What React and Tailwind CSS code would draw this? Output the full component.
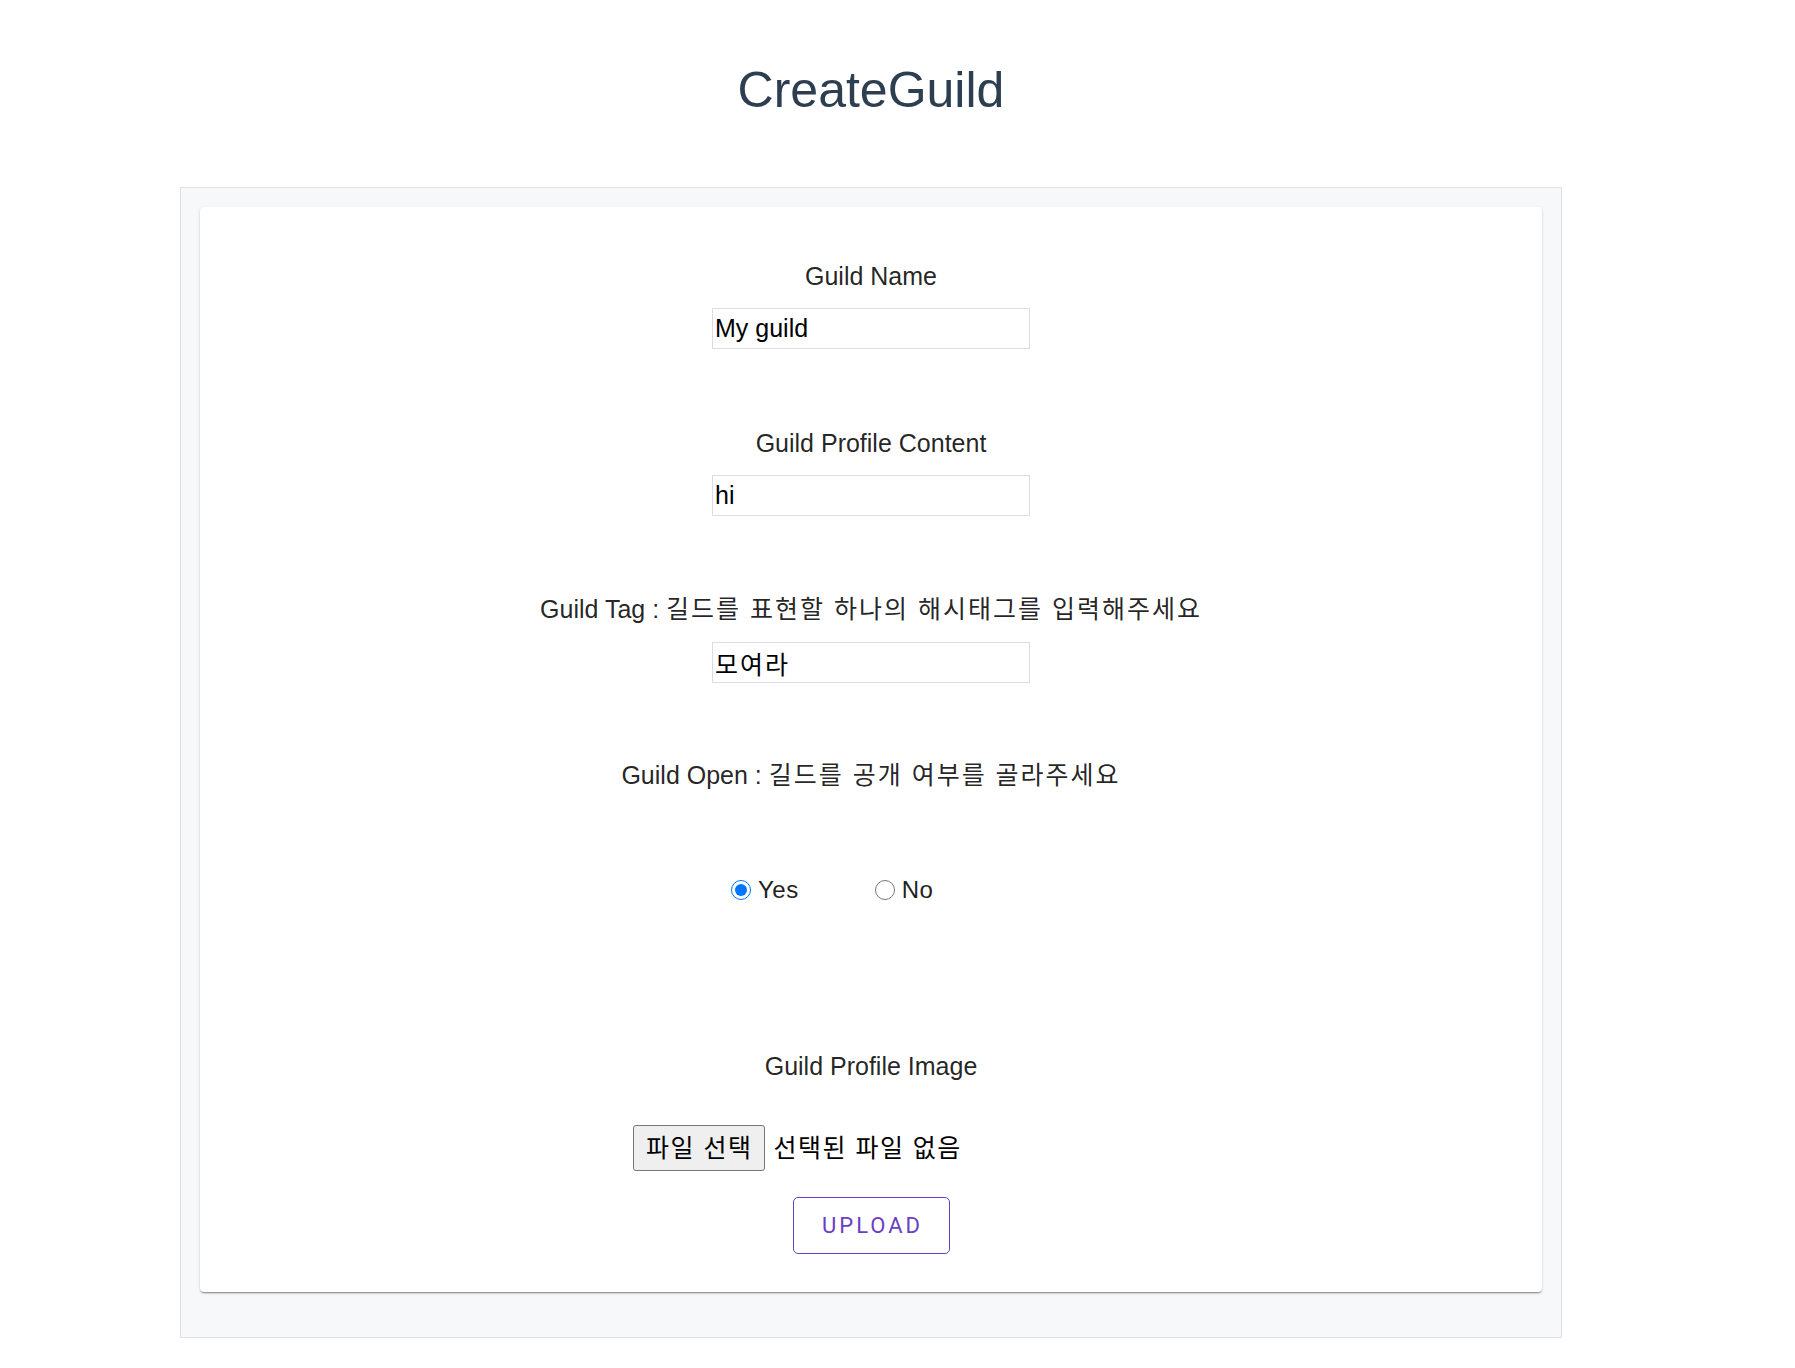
import React from "react";

const FONT = "font-['Liberation_Sans','Noto_Sans_CJK_KR',sans-serif]";

function K({ children }) {
  return <span className="tracking-[2px]">{children}</span>;
}

function Field({ label, value, mt, inputMt = "mt-[17px]", korean = false }) {
  return (
    <div className={`flex flex-col items-center ${mt}`}>
      <div className="text-[25px] leading-[30px] text-[rgba(0,0,0,0.87)] whitespace-nowrap">{label}</div>
      <input
        readOnly
        value={value}
        className={`${inputMt} w-[318px] h-[41px] border border-[#dcdce2] bg-white px-[2px] text-[25px] leading-[30px] text-black outline-none ${korean ? "tracking-[2px]" : ""} ${FONT}`}
      />
    </div>
  );
}

export default function App() {
  return (
    <div className={`min-h-screen bg-white ${FONT}`}>
      <div className="w-[1742px] pt-[65px] pb-[30px]">
        <h1 className="text-center text-[50px] leading-[50px] font-normal text-[#2c3e50]">CreateGuild</h1>
        <div className="mx-[180px] mt-[72px] border border-[#dfe1e5] bg-[#f7f8fa] pt-[19px] px-[19px] pb-[45px]">
          <div className="bg-white rounded-[4px] shadow-[0_2px_2px_-1px_rgba(0,0,0,0.3),0_1px_1px_0_rgba(0,0,0,0.14),0_1px_3px_0_rgba(0,0,0,0.12)] pt-[54px] pb-[38px] flex flex-col items-center">
            <Field label="Guild Name" value="My guild" mt="mt-0" />
            <Field label="Guild Profile Content" value="hi" mt="mt-[79px]" />
            <Field
              label={<>Guild Tag : <K>길드를 표현할 하나의 해시태그를 입력해주세요</K></>}
              value="모여라"
              korean
              mt="mt-[78px]"
              inputMt="mt-[18px]"
            />
            <div className="mt-[77px] text-[25px] leading-[30px] text-[rgba(0,0,0,0.87)] whitespace-nowrap">
              Guild Open : <K>길드를 공개 여부를 골라주세요</K>
            </div>
            <div className="mt-[85px] w-[318px] h-[30px] flex items-center pl-[19px] text-[24px] leading-[30px] text-[#1f1f1f]">
              <label className="flex items-center">
                <input type="radio" name="open" defaultChecked className="m-0 w-[20px] h-[20px]" />
                <span className="ml-[7px] tracking-[0.5px]">Yes</span>
              </label>
              <label className="flex items-center ml-[76px]">
                <input type="radio" name="open" className="m-0 w-[20px] h-[20px]" />
                <span className="ml-[7px] tracking-[0.5px]">No</span>
              </label>
            </div>
            <div className="mt-[146px] text-[25px] leading-[30px] text-[rgba(0,0,0,0.87)]">Guild Profile Image</div>
            <div className="mt-[44px] w-[476px] h-[46px] flex items-center">
              <div className="h-[46px] px-[12px] flex items-center border border-[#767676] bg-[#efefef] rounded-[3px] text-[25px] leading-[30px] text-black whitespace-nowrap tracking-[1.5px]">
                파일 선택
              </div>
              <span className="ml-[8px] text-[25px] leading-[30px] text-black whitespace-nowrap tracking-[1.5px]">선택된 파일 없음</span>
            </div>
            <button className="mt-[26px] w-[157px] h-[57px] border border-[#6a3fc4] rounded-[5px] bg-white text-[#6a3fc4] text-[22px] tracking-[3px] pl-[3px] font-['Roboto',sans-serif] font-normal">
              UPLOAD
            </button>
          </div>
        </div>
      </div>
    </div>
  );
}
